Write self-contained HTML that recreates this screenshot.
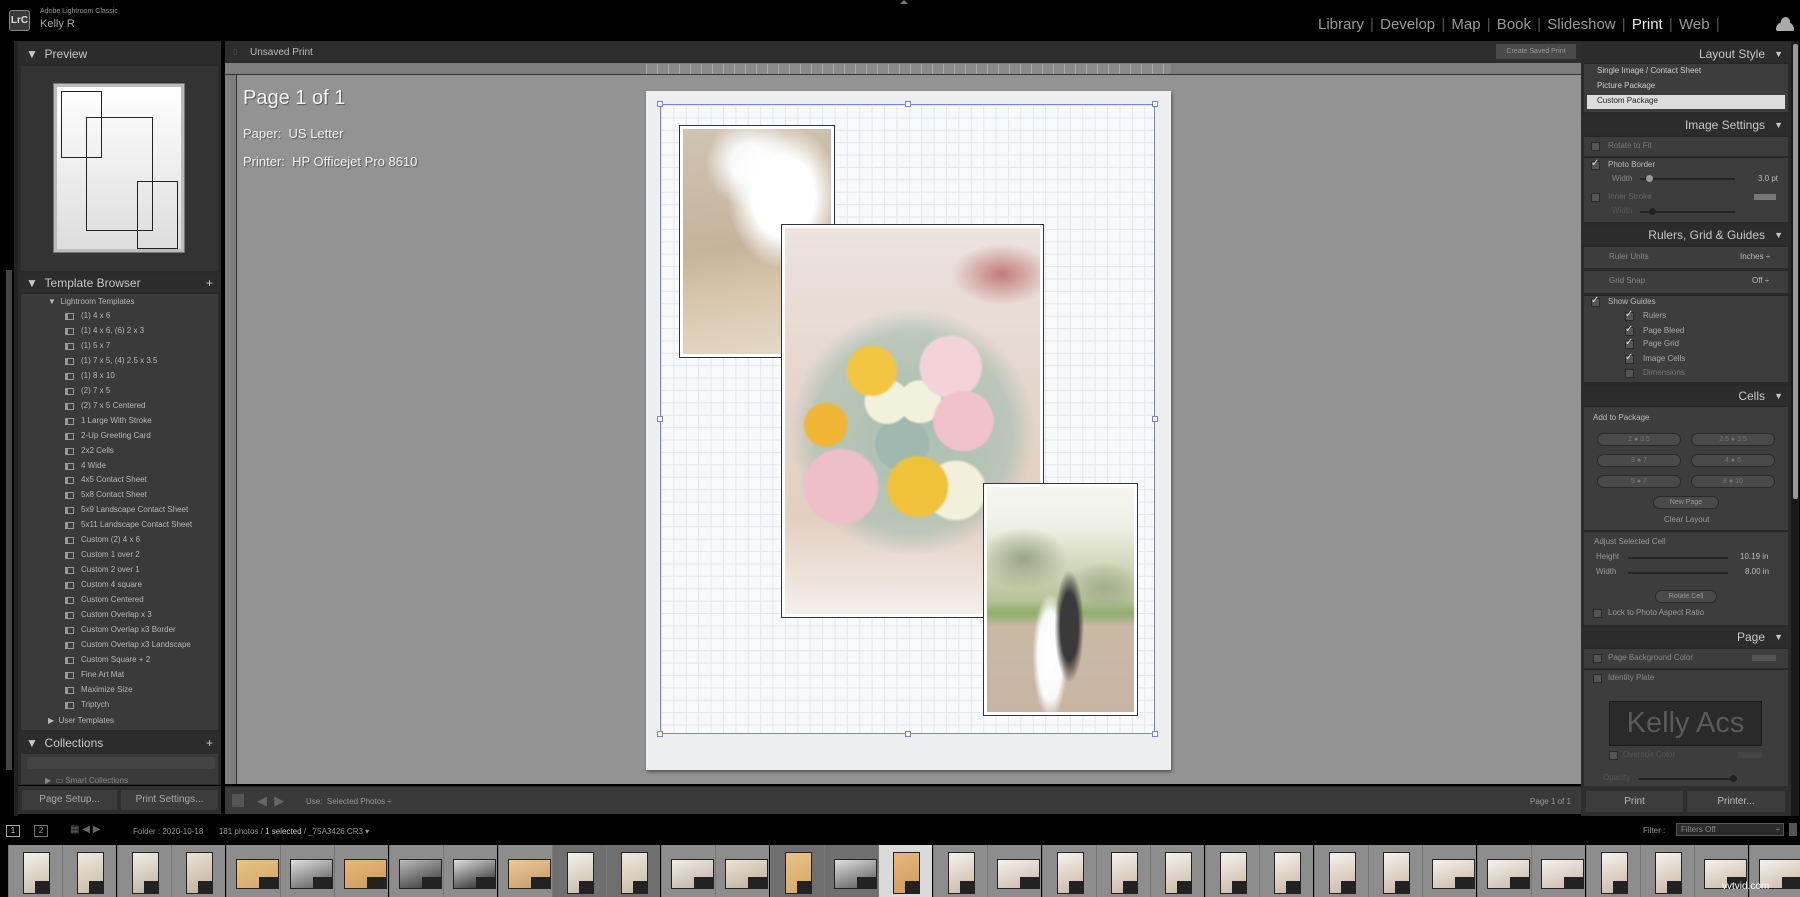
<!DOCTYPE html>
<html><head><meta charset="utf-8">
<style>
*{box-sizing:border-box;margin:0;padding:0}
body{width:1800px;height:897px;overflow:hidden;background:#000;font-family:"Liberation Sans",sans-serif;position:relative;color:#bbb}
.a{position:absolute}
.t{position:absolute;font-size:9px;color:#b8b8b8;white-space:nowrap}
.hdr{position:absolute;background:#2c2c2c;color:#c8c8c8;font-size:12px}
.box{position:absolute;background:#3d3d3d;border-top:1px solid #262626}
.chk{position:absolute;width:9px;height:9px;background:#555;border:1px solid #2a2a2a}
.pill{position:absolute;height:13px;border-radius:7px;background:#4a4a4a;border:1px solid #2a2a2a;font-size:7px;color:#777;text-align:center;line-height:11px}
.sl{position:absolute;height:2px;background:#252525}
.ico{position:absolute;width:9px;height:7px;border:1px solid #999;border-left-width:3px}
.cell{position:absolute;top:845px;width:54px;height:52px;background:#8d8d8d;border-left:1px solid #777}
.th{position:absolute;border:1px solid #222}
</style></head><body>
<!-- top bar -->
<div class="a" style="left:9px;top:10px;width:21px;height:21px;background:#3a3a3a;border:1px solid #888;border-radius:3px;color:#ddd;font-size:10px;font-weight:bold;line-height:19px;text-align:center">LrC</div>
<div class="t" style="left:40px;top:8px;font-size:7px;color:#999">Adobe Lightroom Classic</div>
<div class="t" style="left:40px;top:18px;font-size:11px;color:#aaa">Kelly R</div>
<div class="t" style="left:1318px;top:16px;font-size:15px;color:#9a9a9a;word-spacing:2px">Library <span style="color:#555">|</span> Develop <span style="color:#555">|</span> Map <span style="color:#555">|</span> Book <span style="color:#555">|</span> Slideshow <span style="color:#555">|</span> <span style="color:#eee">Print</span> <span style="color:#555">|</span> Web <span style="color:#555">|</span></div>
<div class="a" style="left:1776px;top:22px;width:18px;height:9px;background:#aaa;border-radius:8px 8px 2px 2px"></div>
<div class="a" style="left:1781px;top:17px;width:9px;height:9px;background:#aaa;border-radius:50%"></div>
<div class="a" style="left:900px;top:0;width:0;height:0;border:4px solid transparent;border-bottom-color:#777;border-top:0"></div>

<!-- left panel -->
<div class="a" style="left:14px;top:41px;width:4px;height:775px;background:#222"></div>
<div class="a" style="left:6px;top:270px;width:6px;height:500px;background:#444"></div>
<div class="a" style="left:18px;top:41px;width:203px;height:744px;background:#2a2a2a"></div>
<div class="hdr" style="left:18px;top:44px;width:203px;height:20px;line-height:20px;padding-left:8px">▼ &nbsp;Preview</div>
<div class="a" style="left:21px;top:66px;width:197px;height:205px;background:#333"></div>
<div class="a" style="left:54px;top:84px;width:130px;height:168px;background:linear-gradient(#fff,#ddd);border:3px solid #bbb;outline:1px solid #777"></div>
<div class="a" style="left:61px;top:91px;width:41px;height:67px;border:1px solid #222"></div>
<div class="a" style="left:86px;top:117px;width:67px;height:114px;border:1px solid #222"></div>
<div class="a" style="left:137px;top:181px;width:41px;height:68px;border:1px solid #222"></div>
<div class="hdr" style="left:18px;top:273px;width:203px;height:20px;line-height:20px;padding-left:8px">▼ &nbsp;Template Browser<span style="position:absolute;right:8px">+</span></div>
<div class="a" style="left:21px;top:294px;width:197px;height:436px;background:#3a3a3a"></div>
<div class="t" style="left:48px;top:297px;font-size:8px">▼ &nbsp;Lightroom Templates</div>
<div id="tl"></div>
<div class="t" style="left:48px;top:716px;font-size:8px">▶ &nbsp;User Templates</div>
<div class="hdr" style="left:18px;top:733px;width:203px;height:20px;line-height:20px;padding-left:8px">▼ &nbsp;Collections<span style="position:absolute;right:8px">+</span></div>
<div class="a" style="left:21px;top:754px;width:197px;height:30px;background:#3a3a3a"></div>
<div class="a" style="left:27px;top:757px;width:188px;height:12px;background:#444;border-radius:3px"></div>
<div class="t" style="left:45px;top:776px;font-size:8px;color:#888">▶ &nbsp;▭ Smart Collections</div>
<div class="a" style="left:18px;top:786px;width:203px;height:28px;background:#2e2e2e"></div>
<div class="a" style="left:22px;top:790px;width:95px;height:20px;background:#3c3c3c;color:#aaa;font-size:10px;text-align:center;line-height:20px">Page Setup...</div>
<div class="a" style="left:121px;top:790px;width:97px;height:20px;background:#3c3c3c;color:#aaa;font-size:10px;text-align:center;line-height:20px">Print Settings...</div>

<!-- center -->
<div class="a" style="left:225px;top:41px;width:1356px;height:22px;background:#2d2d2d"></div>
<div class="t" style="left:250px;top:47px;font-size:10px;color:#bbb">Unsaved Print</div>
<div class="t" style="left:233px;top:47px;font-size:8px;color:#555">▯</div>
<div class="a" style="left:1496px;top:44px;width:80px;height:15px;background:#4a4a4a;color:#999;font-size:7px;text-align:center;line-height:15px">Create Saved Print</div>
<div class="a" style="left:225px;top:63px;width:1356px;height:721px;background:#939393"></div>
<div class="a" style="left:225px;top:63px;width:1356px;height:12px;background:#7e7e7e;border-bottom:1px solid #333"></div>
<div class="a" style="left:646px;top:64px;width:525px;height:10px;background:repeating-linear-gradient(90deg,#aaa 0,#aaa 1px,transparent 1px,transparent 11px) ,#8a8a8a"></div>
<div class="a" style="left:225px;top:75px;width:12px;height:709px;background:#7e7e7e;border-right:1px solid #333"></div>
<div class="t" style="left:243px;top:87px;font-size:20px;color:#f2f2f2;text-shadow:1px 1px 1px #555">Page 1 of 1</div>
<div class="t" style="left:243px;top:126px;font-size:13px;color:#f2f2f2;text-shadow:1px 1px 1px #555">Paper:&nbsp; US Letter</div>
<div class="t" style="left:243px;top:154px;font-size:13px;color:#f2f2f2;text-shadow:1px 1px 1px #555">Printer:&nbsp; HP Officejet Pro 8610</div>

<!-- page -->
<div class="a" style="left:646px;top:91px;width:525px;height:679px;background:#eceeef;box-shadow:1px 2px 3px #555"></div>
<div class="a" style="left:660px;top:104px;width:495px;height:630px;background-color:#f7f9fb;background-image:linear-gradient(90deg,#e3e7ee 1px,transparent 1px),linear-gradient(#e3e7ee 1px,transparent 1px);background-size:12.4px 12.4px;border:1px solid #7b84d0"></div>
<div class="a" style="left:657px;top:101px;width:6px;height:6px;border:1px solid #7b84d0;background:#fff"></div>
<div class="a" style="left:905px;top:101px;width:6px;height:6px;border:1px solid #7b84d0;background:#fff"></div>
<div class="a" style="left:1152px;top:101px;width:6px;height:6px;border:1px solid #7b84d0;background:#fff"></div>
<div class="a" style="left:657px;top:416px;width:6px;height:6px;border:1px solid #7b84d0;background:#fff"></div>
<div class="a" style="left:1152px;top:416px;width:6px;height:6px;border:1px solid #7b84d0;background:#fff"></div>
<div class="a" style="left:657px;top:731px;width:6px;height:6px;border:1px solid #7b84d0;background:#fff"></div>
<div class="a" style="left:905px;top:731px;width:6px;height:6px;border:1px solid #7b84d0;background:#fff"></div>
<div class="a" style="left:1152px;top:731px;width:6px;height:6px;border:1px solid #7b84d0;background:#fff"></div>
<!-- photo1 -->
<div class="a" style="left:679px;top:125px;width:156px;height:233px;background:#fff;border:1px solid #333;padding:3px">
<div style="width:100%;height:100%;background:radial-gradient(ellipse 38% 32% at 68% 30%,#fff 55%,rgba(255,255,255,0) 100%),radial-gradient(ellipse 30% 20% at 45% 15%,#fafafa 40%,rgba(255,255,255,0) 100%),linear-gradient(170deg,#cfc3b3 0%,#c6b39a 50%,#d8c7ad 70%,#e6dac8 100%)"></div></div>
<!-- photo2 -->
<div class="a" style="left:781px;top:224px;width:263px;height:394px;background:#fff;border:1px solid #333;padding:3px">
<div style="width:100%;height:100%;background:
radial-gradient(circle at 34% 37%,#f2c640 0,#f2c640 8%,rgba(0,0,0,0) 9%),
radial-gradient(circle at 52% 67%,#f0c23a 0,#f0c23a 10%,rgba(0,0,0,0) 11%),
radial-gradient(circle at 16% 51%,#f0b535 0,#f0b535 7%,rgba(0,0,0,0) 8%),
radial-gradient(circle at 70% 50%,#f1c2cc 0,#f1c2cc 11%,rgba(0,0,0,0) 12%),
radial-gradient(circle at 22% 67%,#efbfc8 0,#efbfc8 11%,rgba(0,0,0,0) 12%),
radial-gradient(circle at 65% 36%,#f3d3d8 0,#f3d3d8 10%,rgba(0,0,0,0) 11%),
radial-gradient(circle at 40% 45%,#f2f2dc 0,#f2f2dc 8%,rgba(0,0,0,0) 9%),
radial-gradient(circle at 53% 45%,#f2f2dc 0,#f2f2dc 8%,rgba(0,0,0,0) 9%),
radial-gradient(circle at 67% 68%,#f2f0da 0,#f2f0da 9%,rgba(0,0,0,0) 10%),
radial-gradient(circle at 46% 56%,#9fb8b0 0,#9fb8b0 10%,rgba(0,0,0,0) 11%),
radial-gradient(ellipse 48% 32% at 50% 53%,#a8c0b0 0,rgba(168,192,176,.7) 80%,rgba(0,0,0,0) 100%),
radial-gradient(ellipse 20% 8% at 85% 12%,#c27a7a 0,rgba(255,220,210,0) 100%),
linear-gradient(180deg,#ece4de 0%,#e5d6cc 40%,#e3cfc2 75%,#f4efe9 100%)"></div></div>
<!-- photo3 -->
<div class="a" style="left:983px;top:483px;width:155px;height:233px;background:#fff;border:1px solid #333;padding:3px">
<div style="width:100%;height:100%;background:
radial-gradient(ellipse 10% 25% at 56% 62%,#3a3a3a 0,#3a3a3a 60%,rgba(0,0,0,0) 100%),
radial-gradient(ellipse 12% 28% at 43% 75%,#fff 0,#fafafa 70%,rgba(0,0,0,0) 100%),
radial-gradient(ellipse 30% 14% at 25% 32%,#9aa585 0,rgba(154,165,133,0) 100%),
radial-gradient(ellipse 25% 12% at 80% 45%,#a2ad8c 0,rgba(162,173,140,0) 100%),
linear-gradient(180deg,#f6f6f2 0%,#eef0e4 18%,#c8cfae 40%,#b9c39a 50%,#8fae6c 56%,#c9b9a4 62%,#c7b5a3 100%)"></div></div>

<!-- bottom toolbar -->
<div class="a" style="left:225px;top:786px;width:1356px;height:28px;background:#3a3a3a;border-top:1px solid #222"></div>
<div class="a" style="left:232px;top:794px;width:12px;height:13px;background:#555"></div>
<div class="t" style="left:257px;top:793px;font-size:13px;color:#666">◀ &nbsp;▶</div>
<div class="t" style="left:306px;top:797px;font-size:8px;color:#999">Use: &nbsp;Selected Photos ÷</div>
<div class="t" style="left:1530px;top:797px;font-size:8px;color:#999">Page 1 of 1</div>

<!-- right panel -->
<div class="a" style="left:1581px;top:41px;width:210px;height:745px;background:#2a2a2a"></div>
<div class="a" style="left:1791px;top:41px;width:8px;height:775px;background:#1a1a1a"></div>
<div class="a" style="left:1793px;top:44px;width:5px;height:455px;background:#999;border-radius:2px"></div>
<div id="rp"></div>
<div class="a" style="left:1581px;top:786px;width:210px;height:30px;background:#2e2e2e"></div>
<div class="a" style="left:1586px;top:791px;width:97px;height:21px;background:#3c3c3c;color:#bbb;font-size:10px;text-align:center;line-height:21px">Print</div>
<div class="a" style="left:1687px;top:791px;width:98px;height:21px;background:#3c3c3c;color:#bbb;font-size:10px;text-align:center;line-height:21px">Printer...</div>

<!-- filmstrip header -->
<div class="a" style="left:6px;top:825px;width:14px;height:12px;border:1px solid #aaa;color:#ccc;font-size:8px;text-align:center;line-height:10px">1</div>
<div class="a" style="left:34px;top:825px;width:14px;height:12px;border:1px solid #777;color:#999;font-size:8px;text-align:center;line-height:10px">2</div>
<div class="t" style="left:70px;top:824px;font-size:10px;color:#666">▦ ◀ ▶</div>
<div class="t" style="left:133px;top:827px;font-size:8px;color:#999">Folder : 2020-10-18 &nbsp;&nbsp;&nbsp;&nbsp;&nbsp; 181 photos / <b style="color:#ccc;font-weight:normal">1 selected</b> / _75A3426.CR3 ▾</div>
<div class="t" style="left:1643px;top:826px;font-size:8px;color:#999">Filter :</div>
<div class="a" style="left:1676px;top:823px;width:108px;height:13px;background:#2a2a2a;border:1px solid #555;color:#888;font-size:8px;line-height:11px;padding-left:4px">Filters Off<span style="position:absolute;right:3px">÷</span></div>
<div class="a" style="left:1789px;top:823px;width:8px;height:13px;background:#555"></div>
<div id="fs"></div>
<div class="t" style="left:1722px;top:881px;font-size:10px;color:#fff">vvtvid.com</div>

<script>
var T=["(1) 4 x 6","(1) 4 x 6, (6) 2 x 3","(1) 5 x 7","(1) 7 x 5, (4) 2.5 x 3.5","(1) 8 x 10","(2) 7 x 5","(2) 7 x 5 Centered","1 Large With Stroke","2-Up Greeting Card","2x2 Cells","4 Wide","4x5 Contact Sheet","5x8 Contact Sheet","5x9 Landscape Contact Sheet","5x11 Landscape Contact Sheet","Custom (2) 4 x 6","Custom 1 over 2","Custom 2 over 1","Custom 4 square","Custom Centered","Custom Overlap x 3","Custom Overlap x3 Border","Custom Overlap x3 Landscape","Custom Square + 2","Fine Art Mat","Maximize Size","Triptych"];
var h="";T.forEach(function(s,i){var y=311+i*14.95;h+='<div class="ico" style="left:65px;top:'+(y+2)+'px"></div><div class="t" style="left:81px;top:'+y+'px;font-size:8px">'+s+'</div>';});
document.getElementById("tl").innerHTML=h;
var r="";
function hd(y,txt){r+='<div class="hdr" style="left:1581px;top:'+(y-9)+'px;width:210px;height:20px;line-height:20px;text-align:right;padding-right:26px">'+txt+'<span style="position:absolute;right:8px;font-size:9px">▼</span></div>';}
function bx(y1,y2){r+='<div class="box" style="left:1584px;top:'+y1+'px;width:204px;height:'+(y2-y1)+'px"></div>';}
function tx(x,y,s,c){r+='<div class="t" style="left:'+x+'px;top:'+(y-5)+'px;font-size:8px;color:'+(c||'#aaa')+'">'+s+'</div>';}
function ck(x,y,on){r+='<div class="chk" style="left:'+x+'px;top:'+(y-4)+'px"></div>'+(on?'<div class="t" style="left:'+(x)+'px;top:'+(y-7)+'px;font-size:10px;color:#ddd">✓</div>':'');}
hd(53,"Layout Style");bx(63,112);
r+='<div class="a" style="left:1587px;top:95px;width:198px;height:14px;background:#ddd"></div>';
tx(1597,71,"Single Image / Contact Sheet","#ccc");tx(1597,86,"Picture Package","#ccc");tx(1597,101,"Custom Package","#222");
hd(124,"Image Settings");bx(136,156);bx(157,222);
ck(1591,146);tx(1608,146,"Rotate to Fit","#777");
ck(1591,165,1);tx(1608,165,"Photo Border","#bbb");tx(1612,179,"Width","#888");
r+='<div class="sl" style="left:1640px;top:178px;width:95px"></div><div class="a" style="left:1646px;top:175px;width:7px;height:7px;border-radius:50%;background:#999"></div>';tx(1758,179,"3.0 pt","#bbb");
ck(1591,197);tx(1608,197,"Inner Stroke","#666");r+='<div class="a" style="left:1754px;top:194px;width:22px;height:6px;background:#777"></div>';
tx(1612,211,"Width","#555");r+='<div class="sl" style="left:1640px;top:211px;width:95px"></div><div class="a" style="left:1649px;top:208px;width:7px;height:7px;border-radius:50%;background:#222"></div>';
hd(234,"Rulers, Grid &amp; Guides");bx(246,268);bx(270,293);bx(295,382);
tx(1609,257,"Ruler Units","#888");tx(1740,257,"Inches ÷","#bbb");
tx(1609,281,"Grid Snap","#888");tx(1752,281,"Off ÷","#bbb");
ck(1591,302,1);tx(1608,302,"Show Guides","#bbb");
[["Rulers",316],["Page Bleed",331],["Page Grid",344],["Image Cells",359]].forEach(function(a){ck(1625,a[1],1);tx(1643,a[1],a[0],"#aaa");});
ck(1625,373);tx(1643,373,"Dimensions","#777");
hd(395,"Cells");bx(406,530);bx(531,625);
tx(1593,418,"Add to Package","#bbb");
[["2 ● 3.5","2.5 ● 3.5"],["3 ● 7","4 ● 6"],["5 ● 7","8 ● 10"]].forEach(function(p,i){var y=433+i*21;r+='<div class="pill" style="left:1597px;top:'+y+'px;width:84px">'+p[0]+'</div><div class="pill" style="left:1691px;top:'+y+'px;width:84px">'+p[1]+'</div>';});
r+='<div class="pill" style="left:1653px;top:496px;width:66px;color:#999">New Page</div>';tx(1664,520,"Clear Layout","#999");
tx(1594,542,"Adjust Selected Cell","#999");
tx(1596,557,"Height","#999");r+='<div class="sl" style="left:1628px;top:557px;width:100px"></div>';tx(1740,557,"10.19 in","#bbb");
tx(1596,572,"Width","#999");r+='<div class="sl" style="left:1628px;top:572px;width:100px"></div>';tx(1745,572,"8.00 in","#bbb");
r+='<div class="pill" style="left:1655px;top:590px;width:62px;color:#999">Rotate Cell</div>';
ck(1593,613);tx(1608,613,"Lock to Photo Aspect Ratio","#999");
hd(636,"Page");bx(648,668);bx(669,786);
ck(1593,658);tx(1608,658,"Page Background Color","#888");r+='<div class="a" style="left:1752px;top:655px;width:24px;height:6px;background:#555"></div>';
ck(1593,678);tx(1608,678,"Identity Plate","#888");
r+='<div class="a" style="left:1609px;top:701px;width:153px;height:45px;background:#2a2a2a;border:1px solid #1a1a1a;color:#5a5a5a;font-size:29px;text-align:center;line-height:43px">Kelly Acs</div>';
ck(1609,755);tx(1623,755,"Override Color","#555");r+='<div class="a" style="left:1738px;top:752px;width:24px;height:6px;background:#444"></div>';
tx(1603,778,"Opacity","#555");r+='<div class="sl" style="left:1638px;top:778px;width:96px;background:#222"></div><div class="a" style="left:1730px;top:775px;width:7px;height:7px;border-radius:50%;background:#222"></div>';
document.getElementById("rp").innerHTML=r;
var f="",kinds="PPPPLLLLLLPPLLPLPPLPPPPPPPLLLPP".split("");
var cols=[["#f4f2ec","#c6bba5"],["#efe9df","#cab9a2"],["#f1ede6","#bdb1a0"],["#ebe3d6","#bfae98"],["#e9c187","#d4a868"],["#e0e0e0","#555"],["#e6b87a","#cf9c5c"],["#bbb","#333"],["#ddd","#222"],["#ecc999","#c59b63"]];
for(var i=0;i<33;i++){var x=8+i*54.4;var bg=(i==10||i==11||i==14||i==15)?"#6f6f6f":(i==16?"#dadada":"#8d8d8d");
f+='<div class="cell" style="left:'+x+'px;background:'+bg+'"></div>';
var c=cols[i%cols.length];if(i>16)c=["#f5f2ee","#c9b7a3"];
var g='background:linear-gradient(160deg,'+c[0]+','+c[1]+')';
if(kinds[i]=="P"){f+='<div class="th" style="left:'+(x+15)+'px;top:852px;width:27px;height:42px;'+g+'"></div>';f+='<div class="a" style="left:'+(x+27)+'px;top:881px;width:15px;height:12px;background:#222"></div>';}
else{f+='<div class="th" style="left:'+(x+10)+'px;top:859px;width:43px;height:30px;'+g+'"></div>';f+='<div class="a" style="left:'+(x+33)+'px;top:877px;width:19px;height:11px;background:#222"></div>';}}
document.getElementById("fs").innerHTML=f;
</script>
</body></html>
